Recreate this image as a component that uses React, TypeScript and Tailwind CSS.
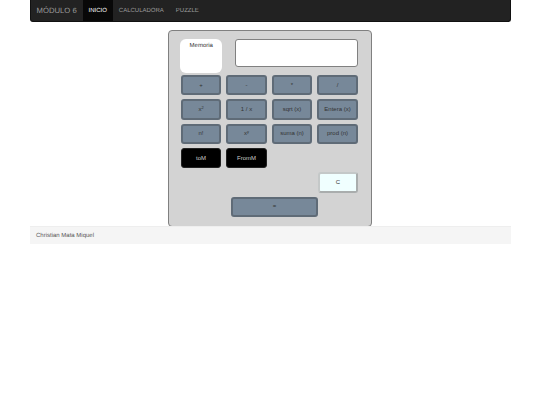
const blue = "h-[20.4px] w-[40.5px] rounded-[3px] border-2 border-[#5f6b77] bg-[#778899] text-[6px] text-[#333] flex items-center justify-center";
const black = "h-[20.4px] w-[40.5px] rounded-[3px] border border-[#222] bg-black text-[6px] text-[#ccc] flex items-center justify-center";

const Key = ({ children, className }: { children: React.ReactNode; className: string }) => (
  <button className={className}>{children}</button>
);

export default function App() {
  return (
    <div className="min-h-[405px] bg-white font-['Liberation_Sans',Arial,sans-serif] [text-rendering:geometricPrecision]">
      <div className="mx-auto w-[481px]">
        <nav className="flex h-[22px] items-stretch rounded-b-[3px] border border-t-0 border-[#111] bg-[#222] text-[6px]">
          <span className="flex w-[52px] items-center pl-[6px] pt-px text-[7.7px] text-[#9d9d9d]">MÓDULO 6</span>
          <a className="flex items-center bg-[#080808] px-[6px] pt-px text-white">INICIO</a>
          <a className="flex items-center px-[6px] pt-px text-[#9d9d9d]">CALCULADORA</a>
          <a className="flex items-center px-[6px] pt-px text-[#9d9d9d]">PUZZLE</a>
        </nav>

        <div className="mx-auto mt-[8px] flex h-[196.5px] w-[203.5px] flex-col rounded-[4px] border border-[#808080] bg-[#d3d3d3] pl-[11px] pt-[8px]">
          <div className="flex items-start">
            <div className="h-[34px] w-[42px] rounded-[6px] bg-white pt-[3px] text-center text-[6px] text-[#333]">Memoria</div>
            <input readOnly className="ml-[13px] h-[27.5px] w-[122.5px] rounded-[3px] border border-[#808080] bg-white" />
          </div>
          <div className="mt-[2px] ml-[.5px] grid w-[177px] grid-cols-4 gap-x-[5px] gap-y-[3.9px]">
            <Key className={blue}>+</Key>
            <Key className={blue}>-</Key>
            <Key className={blue}>*</Key>
            <Key className={blue}>/</Key>
            <Key className={blue}><span>x<sup className="text-[4px]">2</sup></span></Key>
            <Key className={blue}>1 / x</Key>
            <Key className={blue}>sqrt (x)</Key>
            <Key className={blue}>Entera (x)</Key>
            <Key className={blue}>n!</Key>
            <Key className={blue}><span>x<sup className="text-[4px]">y</sup></span></Key>
            <Key className={blue}>suma (n)</Key>
            <Key className={blue}>prod (n)</Key>
            <Key className={black}>toM</Key>
            <Key className={black}>FromM</Key>
          </div>
          <div className="mt-[4px] ml-[1px] flex w-[177px] justify-end">
            <button className="flex h-[20.4px] w-[40.5px] items-center justify-center rounded-[3px] border-2 border-[#a9adad] border-l-[#c4c8c8] border-t-[#c4c8c8] bg-[#f0ffff] text-[6px] text-[#333]">C</button>
          </div>
          <div className="mt-[3.9px] pl-[51px]">
            <button className="flex h-[20.5px] w-[86.5px] items-center justify-center rounded-[3px] border-2 border-[#5f6b77] bg-[#778899] text-[6px] text-[#333]">=</button>
          </div>
        </div>

        <footer className="-mt-px flex h-[18px] items-center border-t border-[#eee] bg-[#f5f5f5] pl-[6.5px] pt-[2px] text-[6px] text-[#555]">
          Christian Mata Miquel
        </footer>
      </div>
    </div>
  );
}
